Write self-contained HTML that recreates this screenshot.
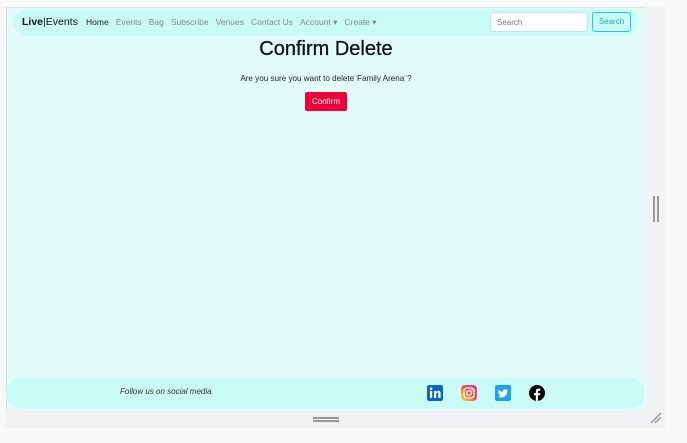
<!DOCTYPE html>
<html><head><meta charset="utf-8"><style>
*{margin:0;padding:0;box-sizing:border-box}
body{width:687px;height:443px;background:#f8f9f9;position:relative;overflow:hidden;font-family:"Liberation Sans",sans-serif}
.grey{position:absolute;left:6px;top:7px;width:659px;height:421px;background:#f1f2f4}
.page{position:absolute;left:6px;top:7px;width:640px;height:403px;background:#e2fdf9;border-left:1px solid #dde;border-top:1px solid #e3e3e3}
.nav{position:absolute;left:13px;top:9px;width:625px;height:27px;background:#c9fcf4;border-radius:14px}
.brand{position:absolute;left:22px;top:16px;font-size:10.5px;color:#111}
.brand b{font-weight:bold}
.links{position:absolute;left:86px;top:17px;font-size:8.5px;color:#888;white-space:nowrap}
.links span{margin-right:7px}
.srch{position:absolute;left:490px;top:12px;width:98px;height:20px;background:#fff;border:1px solid #cde;border-radius:3px;font-size:8px;color:#777;padding:5px 6px}
.btn{position:absolute;left:592px;top:12px;width:39px;height:20px;border:1px solid #2bc6cf;border-radius:3px;font-size:8px;color:#17a9b8;text-align:center;line-height:18px}
h1{position:absolute;left:0;width:652px;top:38px;text-align:center;font-size:20px;font-weight:normal;color:#111;-webkit-text-stroke:0.3px #111}
.q{position:absolute;left:0;width:652px;top:74px;text-align:center;font-size:8.1px;color:#222}
.q i{font-style:normal;color:#c8b040}
.cbtn{position:absolute;left:305px;top:92px;width:42px;height:19px;background:#ee0038;color:#fff;border-radius:2px;font-size:8px;text-align:center;line-height:19px}
.foot{position:absolute;left:6px;top:377px;width:639px;height:32px;background:#c9fcf4;border-radius:16px}
.ft{position:absolute;left:120px;top:387px;font-size:8px;font-style:italic;color:#333}
.ic{position:absolute;top:385px;width:16px;height:16px;border-radius:2px}
.thumb{position:absolute;left:653px;top:196px;width:2px;height:26px;background:#999;box-shadow:4px 0 0 #999}
.hb{position:absolute;left:313px;top:417px;width:26px;height:2px;background:#999;box-shadow:0 3px 0 #999}
</style></head><body>
<div class="grey"></div>
<div class="page"></div>
<div class="nav"></div>
<div class="brand"><b>Live</b>|Events</div>
<div class="links"><span style="color:#222">Home</span><span>Events</span><span>Bag</span><span>Subscribe</span><span>Venues</span><span>Contact Us</span><span>Account ▾</span><span>Create ▾</span></div>
<div class="srch">Search</div>
<div class="btn">Search</div>
<h1>Confirm Delete</h1>
<div class="q">Are you sure you want to delete<i>"</i>Family Arena<i>"</i>?</div>
<div class="cbtn">Confirm</div>
<div class="foot"></div>
<div class="ft">Follow us on social media</div>
<svg class="ic" style="left:427px" viewBox="0 0 16 16"><rect width="16" height="16" rx="2" fill="#0a66c2"/><rect x="3" y="6" width="2.2" height="7" fill="#fff"/><circle cx="4.1" cy="3.8" r="1.3" fill="#fff"/><path d="M7 6h2v1c.6-1 1.6-1.2 2.4-1.2 1.6 0 2.2 1 2.2 2.8V13h-2.2V9c0-.9-.3-1.4-1-1.4S9.2 8.1 9.2 9v4H7z" fill="#fff"/></svg>
<svg class="ic" style="left:461px" viewBox="0 0 16 16"><defs><linearGradient id="g" x1="0" y1="1" x2="1" y2="0"><stop offset="0" stop-color="#fd5"/><stop offset=".5" stop-color="#ff543e"/><stop offset="1" stop-color="#c837ab"/></linearGradient></defs><rect width="16" height="16" rx="4" fill="url(#g)"/><rect x="3" y="3" width="10" height="10" rx="3" fill="none" stroke="#fff" stroke-width="1.3"/><circle cx="8" cy="8" r="2.4" fill="none" stroke="#fff" stroke-width="1.3"/><circle cx="11" cy="5" r=".7" fill="#fff"/></svg>
<svg class="ic" style="left:495px" viewBox="0 0 16 16"><rect width="16" height="16" rx="2" fill="#1da1f2"/><path d="M13 5.2c-.4.2-.8.3-1.2.3.4-.3.8-.7.9-1.1-.4.2-.9.4-1.3.5a2.1 2.1 0 0 0-3.6 1.9C6 6.7 4.5 5.9 3.5 4.6c-.6 1-.3 2.2.6 2.8-.3 0-.6-.1-.9-.3 0 1 .7 1.9 1.7 2.1-.3.1-.6.1-1 0 .3.9 1.1 1.5 2 1.5A4.2 4.2 0 0 1 3 11.6 6 6 0 0 0 12.2 6.3c.3-.3.6-.7.8-1.1z" fill="#fff"/></svg>
<svg class="ic" style="left:529px" viewBox="0 0 16 16"><circle cx="8" cy="8" r="8" fill="#000"/><path d="M9 16V10.3h1.9l.3-2.2H9V6.7c0-.6.2-1 1.1-1h1.2V3.7c-.2 0-.9-.1-1.7-.1-1.7 0-2.8 1-2.8 2.9v1.6H4.9v2.2h1.9V16z" fill="#fff"/></svg>
<div class="thumb"></div>
<div class="hb"></div>
<svg style="position:absolute;left:649px;top:411px" width="14" height="14"><path d="M2 12L12 2M6 12L12 6" stroke="#999" stroke-width="1.5"/></svg>
</body></html>
